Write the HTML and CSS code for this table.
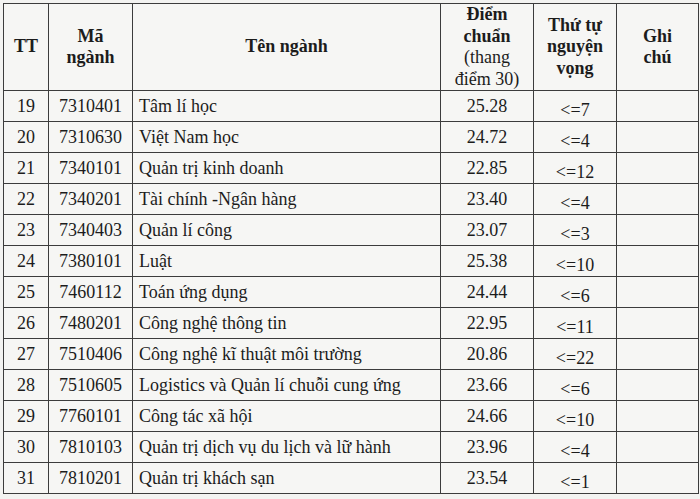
FILE: index.html
```html
<!DOCTYPE html>
<html lang="vi">
<head>
<meta charset="utf-8">
<link rel="stylesheet" href="styles.css">
</head>
<body>
<table class="scores">
  <colgroup>
    <col class="c-tt"><col class="c-ma"><col class="c-ten"><col class="c-diem"><col class="c-nv"><col class="c-ghi">
  </colgroup>
  <thead>
    <tr>
      <th>TT</th>
      <th>Mã<br>ngành</th>
      <th>Tên ngành</th>
      <th class="diem-h">Điểm<br>chuẩn<br><span class="reg">(thang<br>điểm 30)</span></th>
      <th>Thứ tự<br>nguyện<br>vọng</th>
      <th>Ghi<br>chú</th>
    </tr>
  </thead>
  <tbody>
    <tr><td>19</td><td>7310401</td><td class="name">Tâm lí học</td><td>25.28</td><td class="nv">&lt;=7</td><td></td></tr>
    <tr><td>20</td><td>7310630</td><td class="name">Việt Nam học</td><td>24.72</td><td class="nv">&lt;=4</td><td></td></tr>
    <tr><td>21</td><td>7340101</td><td class="name">Quản trị kinh doanh</td><td>22.85</td><td class="nv">&lt;=12</td><td></td></tr>
    <tr><td>22</td><td>7340201</td><td class="name">Tài chính -Ngân hàng</td><td>23.40</td><td class="nv">&lt;=4</td><td></td></tr>
    <tr><td>23</td><td>7340403</td><td class="name">Quản lí công</td><td>23.07</td><td class="nv">&lt;=3</td><td></td></tr>
    <tr><td>24</td><td>7380101</td><td class="name">Luật</td><td>25.38</td><td class="nv">&lt;=10</td><td></td></tr>
    <tr><td>25</td><td>7460112</td><td class="name">Toán ứng dụng</td><td>24.44</td><td class="nv">&lt;=6</td><td></td></tr>
    <tr><td>26</td><td>7480201</td><td class="name">Công nghệ thông tin</td><td>22.95</td><td class="nv">&lt;=11</td><td></td></tr>
    <tr><td>27</td><td>7510406</td><td class="name">Công nghệ kĩ thuật môi trường</td><td>20.86</td><td class="nv">&lt;=22</td><td></td></tr>
    <tr><td>28</td><td>7510605</td><td class="name">Logistics và Quản lí chuỗi cung ứng</td><td>23.66</td><td class="nv">&lt;=6</td><td></td></tr>
    <tr><td>29</td><td>7760101</td><td class="name">Công tác xã hội</td><td>24.66</td><td class="nv">&lt;=10</td><td></td></tr>
    <tr><td>30</td><td>7810103</td><td class="name">Quản trị dịch vụ du lịch và lữ hành</td><td>23.96</td><td class="nv">&lt;=4</td><td></td></tr>
    <tr><td>31</td><td>7810201</td><td class="name">Quản trị khách sạn</td><td>23.54</td><td class="nv">&lt;=1</td><td></td></tr>
  </tbody>
</table>
</body>
</html>
```

FILE: styles.css
```css
html, body {
  margin: 0;
  padding: 0;
  background: #f3f3f1;
}
body {
  padding: 3px 0 0 3px;
  font-family: "Liberation Serif", "Times New Roman", serif;
  color: #1c1c1c;
}
.scores {
  border-collapse: collapse;
  table-layout: fixed;
  width: 695px;
  background: #f6f6f4;
}
.c-tt { width: 45px; }
.c-ma { width: 84px; }
.c-ten { width: 308px; }
.c-diem { width: 93px; }
.c-nv { width: 83px; }
.c-ghi { width: 82px; }

.scores th, .scores td {
  border: 1px solid #3c3c3c;
  padding: 0;
  text-align: center;
  vertical-align: middle;
}
.scores th {
  height: 86px;
  font-weight: bold;
  font-size: 18px;
  line-height: 21.5px;
}
.scores th .reg {
  font-weight: normal;
  font-size: 18px;
}
.scores td {
  height: 29px;
  font-size: 18px;
  line-height: 20px;
}
.scores td.name {
  text-align: left;
  padding-left: 6px;
}
.scores td.nv {
  vertical-align: bottom;
  padding-bottom: 1px;
}
```
